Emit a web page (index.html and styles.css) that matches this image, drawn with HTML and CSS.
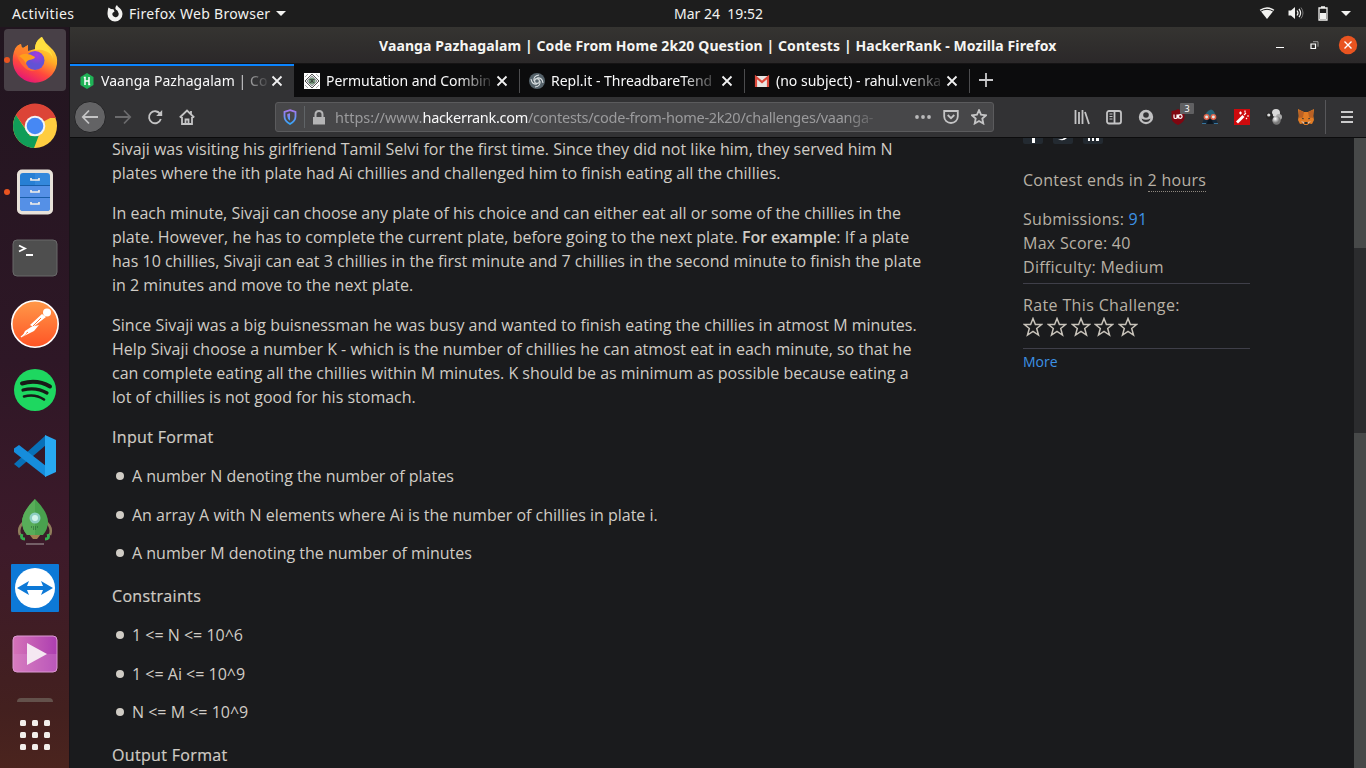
FILE: index.html
```html
<!DOCTYPE html>
<html lang="en">
<head>
<meta charset="utf-8">
<title>Vaanga Pazhagalam</title>
<link rel="stylesheet" href="styles.css">
</head>
<body>
<header class="topbar">
  <span class="activities">Activities</span>
  <svg class="app-mark" width="16" height="17" viewBox="0 0 16 17"><path fill="#f2f2f0" d="M1.500 2.500 4 4 6.500 4.300 7.500 6.500 5.500 8A3.200 3.200 0 1 0 11 7C11 5.500 9 5 8.500 4 8 2.500 9 1 10 0c.5 2 2.500 2.500 4 4.500 1 1.500 1.500 3 1.500 4.500a7.500 7.500 0 0 1-15 0C.5 6.500 1 4 1.500 2.500z"/></svg>
  <span class="app-name">Firefox Web Browser</span>
  <i class="caret"></i>
  <span class="clock">Mar 24&nbsp; 19:52</span>
  <div class="status">
    <svg width="16" height="14" viewBox="0 0 16 14"><path d="M.7 3.800Q8-1.300 15.300 3.800L8 13z" fill="#f2f2f0"/><path d="M1.500 4.300Q8 .3 14.500 4.300" stroke="#1d1d1d" fill="none" stroke-width="1" transform="translate(0 1)"/></svg>
    <svg width="16" height="14" viewBox="0 0 16 14"><path d="M.5 4.500H3L7 1v12L3 9.500H.5z" fill="#f2f2f0"/><path d="M9 4.500q2 2.500 0 5M11 2.800q3.200 4.200 0 8.400" fill="none" stroke="#f2f2f0" stroke-width="1.200"/><path d="M13 1.500q4 5.500 0 11" fill="none" stroke="#777"/></svg>
    <svg width="10" height="15" viewBox="0 0 10 15"><path d="M1 2h8v12H1zM3 .8h4" fill="none" stroke="#f2f2f0" stroke-width="1.300"/><path d="M2 7h6v6H2z" fill="#f2f2f0"/></svg>
    <i class="caret"></i>
  </div>
</header>
<div class="desktop">
<nav class="dock">
  <div class="app active run"><svg width="46" height="48" viewBox="0 0 46 48">
    <defs><linearGradient id="fx" x1=".8" y1="0" x2=".3" y2="1"><stop offset="0" stop-color="#fff14a"/><stop offset=".4" stop-color="#ffad25"/><stop offset=".7" stop-color="#ff493d"/><stop offset="1" stop-color="#e3127b"/></linearGradient><radialGradient id="fp" cx=".6" cy=".2"><stop offset="0" stop-color="#a53adf"/><stop offset="1" stop-color="#6352d5"/></radialGradient></defs>
    <path fill="url(#fx)" d="M3 13Q5 9 9 8q0 3 2 4l5-3v6l7-2c0-6 3-10 7-12q3 6 8 10l3 3q5 6 4 14a22.300 22.300 0 0 1-44 0Q0 19 3 13z"/><path fill="#ff792c" d="M3 13Q5 9 9 8q0 3 2 4l5-3v6q4 0 8 5 0 3-8 5 2 7 10 8-8 5-15-3Q6 25 3 13z" opacity=".75"/><circle cx="23" cy="24.500" r="9.500" fill="url(#fp)"/><path fill="#ff9e1b" d="M7 20q7-5 16 1 0 2-6 3-3 1-3 4-2-5-7-8z"/><path fill="#ffdf40" d="M23 14c0-7 3-11 7-13 1 7 10 12 11 22q-2-7-8-8-3-2-10-1z"/></svg></div>
  <div class="app"><svg width="46" height="46" viewBox="0 0 46 46"><circle cx="23" cy="23" r="22" fill="#ffcd40"/><path d="M23 23H12L4 12A22 22 0 0 1 42 13z" fill="#dc4437"/><path d="m4 12 14 21 9-1-5 13A22 22 0 0 1 4 12z" fill="#109d58"/><path d="m4 12 10 14 4-11h26l-2-4A22 22 0 0 0 4 12" fill="#dc4437"/><circle cx="23" cy="23" r="10.300" fill="#f4f4f4"/><circle cx="23" cy="23" r="8.300" fill="#4688f4"/></svg></div>
  <div class="app run"><svg width="38" height="46" viewBox="0 0 38 46"><rect x="1" y=".5" width="36" height="45" rx="5" fill="#e8e2da"/><path d="M4 7q0-3 3-3h12v38H7q-3 0-3-3z" fill="#277fd4"/><path d="M19 4h12q3 0 3 3v32q0 3-3 3H19z" fill="#3488dc"/><path d="M4 17h30v11H4zM4 29h30v10q0 3-3 3H7q-3 0-3-3z" fill="#5590e6"/><path d="M4 16.500h30M4 28.500h30" stroke="#185da8"/><path d="M15 9v2h8V9M15 21v2h8v-2M15 33v2h8v-2" fill="none" stroke="#f2eee9" stroke-width="1.700"/></svg></div>
  <div class="app"><svg width="46" height="38" viewBox="0 0 46 38"><rect x="1" y="1" width="44" height="36" rx="4" fill="#4e4e4e" stroke="#696969"/><path d="m7 6.500 6 3-6 3M14 16h7" fill="none" stroke="#fff" stroke-width="1.800"/></svg></div>
  <div class="app"><svg width="50" height="50" viewBox="0 0 50 50"><defs><linearGradient id="pm" x1="0" y1="0" x2="0" y2="1"><stop offset="0" stop-color="#ff9949"/><stop offset="1" stop-color="#ff5425"/></linearGradient></defs><circle cx="25" cy="25" r="23.200" fill="url(#pm)" stroke="#fff" stroke-width="1.600"/><circle cx="37" cy="13.500" r="4" fill="#fff"/><path d="M32 15 20 26l3 2 13-10zM21 28l-6 4-3 6 12-6 5-6z" fill="#fff"/><path d="m12 38 6-5M31 19l-8 8" stroke="#ff7537"/><path d="m11 38 5-4" stroke="#fff" stroke-width="1.500"/></svg></div>
  <div class="app"><svg width="44" height="44" viewBox="0 0 44 44"><circle cx="22" cy="22" r="21" fill="#1ed760"/><g fill="none" stroke="#181a18" stroke-linecap="round"><path d="M9 15.500q15-4.500 28 3" stroke-width="4"/><path d="M10 22q13-3.500 24 3" stroke-width="3.200"/><path d="M11 28.500q11-3 20 3" stroke-width="2.600"/></g></svg></div>
  <div class="app"><svg width="44" height="44" viewBox="0 0 44 44"><path d="m1 30 5 4L33 11V1z" fill="#0870b7"/><path d="M1 14.500 6 11l27 21v11L1 18z" fill="#168ddc"/><path d="M32 1 43 6v32l-11 5z" fill="#28a8f2"/></svg></div>
  <div class="app"><svg width="38" height="48" viewBox="0 0 38 48"><path d="M9 23q-8 6-5 14M29 23q8 6 5 14" stroke="#8f7d5b" stroke-width="2.500" fill="none"/><path d="M9 41q-5 0-3-5M29 41q5 0 3-5" stroke="#36af50" stroke-width="3" fill="none"/><path d="M13 36h12l-4 5h-4z" fill="#a28251"/><path d="M19 1Q32 14 32 24q0 7-5 13H11q-5-6-5-13Q6 14 19 1z" fill="#49a14e"/><path d="M19 1v36h-8q-5-6-5-13Q6 14 19 1z" fill="#58ad59"/><circle cx="19" cy="20" r="5.500" fill="#8ccdc0"/><circle cx="19" cy="20" r="3" fill="#d3f4ea"/><path d="M15 29h8M17 31h4" stroke="#235c32" stroke-dasharray="1 1"/><path d="M10 46h18" stroke="#87777d" stroke-width="1.500"/></svg></div>
  <div class="app"><svg width="48" height="48" viewBox="0 0 48 48"><rect width="48" height="48" rx="1" fill="#0d79d7"/><circle cx="24" cy="24" r="20" fill="#fff"/><path d="m6 24 12-7-2 5h16l-2-5 12 7-12 7 2-5H16l2 5z" fill="#0d79d7"/></svg></div>
  <div class="app"><svg width="46" height="38" viewBox="0 0 46 38"><defs><linearGradient id="vp"><stop stop-color="#d574b8"/><stop offset="1" stop-color="#ad3eb1"/></linearGradient></defs><rect x="1" y="1" width="44" height="36" rx="4" fill="url(#vp)" stroke="#dc9bd2"/><path d="M1 19h44v14q0 4-4 4H5q-4 0-4-4z" fill="#dc91cf" opacity=".3"/><path d="m15 8 20 11-20 11z" fill="#f5e8f2"/></svg></div>
  <div class="peek"></div>
  <div class="grid"><i></i><i></i><i></i><i></i><i></i><i></i><i></i><i></i><i></i></div>
</nav>
<main class="window">
  <div class="titlebar"><span class="title">Vaanga Pazhagalam | Code From Home 2k20 Question | Contests | HackerRank - Mozilla Firefox</span>
    <div class="wm"><i class="min"></i><svg width="9" height="9" viewBox="0 0 9 9"><path d="M1 3h4.500v4.500H1z" fill="none" stroke="#fff" stroke-width="1.200"/><path d="M3 .7h5v5" fill="none" stroke="#999"/></svg><svg width="20" height="20" viewBox="0 0 20 20"><circle cx="10" cy="10" r="9.200" fill="#e95420"/><path d="m6.500 6.500 7 7m0-7-7 7" stroke="#fff" stroke-width="1.400"/></svg></div>
  </div>
  <div class="tabs">
    <div class="tab current"><svg width="16" height="16" viewBox="0 0 16 16"><path d="m8 0 6.500 4v8L8 16l-6.500-4V4z" fill="#1fb256"/><path d="M6 4v8M10 4v8M6 8h4M4.800 4.500h2M9.200 11.500h2" stroke="#fff" stroke-width="1.500"/></svg><span class="label l1">Vaanga Pazhagalam | Coc</span><svg class="close" width="12" height="12"><path d="m1.500 1.500 9 9m0-9-9 9"/></svg></div>
    <div class="tab"><svg width="16" height="16" viewBox="0 0 16 16"><path fill="#fff" d="M0 0h16v16H0z"/><path d="m8 1 7 7-7 7-7-7z" fill="#eef0ed" stroke="#555"/><path d="m8 3 5 5-5 5-5-5z" fill="#b9c7bb" stroke="#667"  stroke-width=".6"/><circle cx="8" cy="8" r="3" fill="#6d9274"/><path d="M5.500 6.500h2v2h1v-2h2M5.500 10l2.500-1.500 2.500 1.500" fill="none" stroke="#333" stroke-width=".7"/><path d="m1 4 3-3m8 0 3 3M1 12l3 3m8 0 3-3" stroke="#aaa"/></svg><span class="label l2">Permutation and Combin</span><svg class="close" width="12" height="12"><path d="m1.500 1.500 9 9m0-9-9 9"/></svg></div>
    <div class="tab"><svg width="16" height="16" viewBox="0 0 16 16"><circle cx="8" cy="8" r="8" fill="#56636b"/><g fill="none" stroke="#dce1e3" stroke-width="1.100"><circle cx="8" cy="8" r="2.400"/><path d="M5 8q-1-5 5-6M11 8q1 5-5 6M8 5q5-1 6 5M8 11q-5 1-6-5"/></g></svg><span class="label l3">Repl.it - ThreadbareTend</span><svg class="close" width="12" height="12"><path d="m1.500 1.500 9 9m0-9-9 9"/></svg></div>
    <div class="tab"><svg width="16" height="16" viewBox="0 0 16 16"><path d="M1 3h14v11H1z" fill="#e8e5e3"/><path d="M2 14V4l6 5 6-5v10" fill="none" stroke="#dd493c" stroke-width="2.200"/></svg><span class="label l4">(no subject) - rahul.venka</span><svg class="close" width="12" height="12"><path d="m1.500 1.500 9 9m0-9-9 9"/></svg></div>
    <svg class="plus" width="16" height="16"><path d="M8 1v14M1 8h14" stroke="#c9c9cb" stroke-width="1.800"/></svg>
  </div>
  <div class="toolbar">
    <div class="nav"><span class="back"><svg width="18" height="16" viewBox="0 0 18 16"><path d="M8 1.500 1.800 8 8 14.500M2 8h15"/></svg></span>
    <span class="nb dim"><svg width="18" height="16" viewBox="0 0 18 16"><path d="M10 1.500 16.200 8 10 14.500M16 8H1"/></svg></span>
    <span class="nb"><svg width="16" height="16" viewBox="0 0 16 16"><path d="M13 4.800A6 6 0 1 0 13.800 10"/><path class="tip" d="M15.200 1v6H9.200z"/></svg></span>
    <span class="nb"><svg width="16" height="16" viewBox="0 0 16 16"><path d="m.8 8.500 7.200-7 7.200 7M3 8v7h10V8M12 2v3M6.500 14.500v-4h3v4"/></svg></span></div>
    <div class="urlbar"><svg width="14" height="16" viewBox="0 0 14 16"><defs><linearGradient id="sh" x1="0" y1="0" x2="0" y2="1"><stop stop-color="#a579ee"/><stop offset="1" stop-color="#35a6fa"/></linearGradient></defs><path d="M7 1.200 12.500 3v4.500q0 4.500-5.500 7.500-5.500-3-5.500-7.500V3z" fill="none" stroke="url(#sh)" stroke-width="1.800"/><path d="M7 4.300v7.500Q4.300 10 4.300 7V5z" fill="url(#sh)"/></svg>
      <i class="sep"></i><svg width="14" height="15" viewBox="0 0 14 15"><path d="M1 7h12v7.500H1z" fill="#b4b4b5"/><path d="M3.500 7V4.500Q3.500 1 7 1t3.500 3.500V7" stroke="#b4b4b5" fill="none" stroke-width="2"/></svg>
      <span class="url"><span class="u1">https://www.</span><b>hackerrank.com</b><span class="u2">/contests/code-from-home-2k20/challenges/vaanga-</span></span>
      <svg class="i-dots" width="16" height="16"><g fill="#b9b9ba"><circle cx="2" cy="8" r="1.900"/><circle cx="8" cy="8" r="1.900"/><circle cx="14" cy="8" r="1.900"/></g></svg>
      <svg width="16" height="16" viewBox="0 0 16 16" class="ln"><path d="M1.200 2h13.600v5.500a6.800 6.500 0 0 1-13.600 0z"/><path d="m4.700 6 3.300 3.200L11.300 6"/></svg>
      <svg width="16" height="16" viewBox="0 0 16 16" class="ln"><path d="m8 1.200 2 4.500 5 .6-3.700 3.200 1 5L8 12l-4.300 2.500 1-5L1 6.300l5-.6z"/></svg>
    </div>
    <div class="tools">
      <span><svg width="16" height="16" viewBox="0 0 16 16" class="ln"><path d="M1.500 1v14M5 3v12M8.500 1v14M11 3l4 12"/></svg></span>
      <span><svg width="16" height="16" viewBox="0 0 16 16" class="ln"><rect x="1" y="2" width="14" height="12.500" rx="2"/><path d="M8.500 2v12"/><path class="thin" d="M3.500 5h3M3.500 7.500h3M3.500 10h3"/></svg></span>
      <span><svg width="16" height="16" viewBox="0 0 16 16"><circle cx="8" cy="8" r="7.200" fill="#c0c0c1"/><circle cx="8" cy="6" r="2.800" fill="#323234"/><path d="M3.500 9.500q4.500 2.500 9 0Q11.500 13 8 13T3.500 9.500z" fill="#323234"/></svg></span>
      <span class="ub"><svg width="16" height="16" viewBox="0 0 16 16"><path d="M8 0q3 2 6.500 2v7q0 4-6.500 7-6.500-3-6.500-7V2Q5 2 8 0z" fill="#800610"/><path d="M4 5.500v3q0 1 1.500 1T7 8.500v-3M8.200 5.500v4" stroke="#fff" fill="none" stroke-width="1.200"/><circle cx="10.300" cy="7.500" r="1.800" stroke="#fff" fill="none" stroke-width="1.200"/></svg><em>3</em></span>
      <span><svg width="16" height="16" viewBox="0 0 16 16"><path d="M3 7Q4 2 9 .5 12 1 13 5l1 3H2z" fill="#286478"/><path d="M2 10h12l2 5H0z" fill="#14283a"/><path d="M6 10h4l1 5H5z" fill="#0d151e"/><g fill="#dfebe9" stroke="#e26349" stroke-width="1.500"><circle cx="4.600" cy="8" r="2.200"/><circle cx="11.400" cy="8" r="2.200"/></g><path d="M0 14.500h4M12 14.500h4" stroke="#37749c"/></svg></span>
      <span><svg width="16" height="16" viewBox="0 0 16 16"><path fill="#ce0a0d" d="M0 0h16v16H0z"/><path d="M3 13.500 9.500 7" stroke="#fff" stroke-width="2.800"/><path d="m10 6 2-2M5 4h3M6.500 2.500v3M11 1.500v2M13 7h2M12 9l1 1" stroke="#fff" stroke-width="1.200"/></svg></span>
      <span><svg width="16" height="16" viewBox="0 0 16 16"><defs><radialGradient id="bl" cx=".35" cy=".3"><stop stop-color="#fff"/><stop offset="1" stop-color="#777"/></radialGradient></defs><circle cx="10" cy="4" r="4" fill="#d8d8d8"/><circle cx="13" cy="8" r="3" fill="#aaa"/><circle cx="10.500" cy="11.500" r="4.200" fill="url(#bl)"/><circle cx="3.500" cy="7" r="3.500" fill="#292929"/><circle cx="2.800" cy="6" r="1.600" fill="#ddd"/></svg></span>
      <span><svg width="16" height="16" viewBox="0 0 16 16"><path d="m0 0 6 3h4l6-3-.7 7 .7 4-2 4-3-.5L9.500 16h-3L5 14.500 2 15l-2-4 .7-4z" fill="#e27c24"/><path d="M1 1l5 2-1 5-4 1zM15 1l-5 2 1 5 4 1z" fill="#bb6124"/><path d="m3.500 8.500 2.500 1-1 1zM12.500 8.500l-2.500 1 1 1zM6.500 13h3v2h-3z" fill="#222d36"/><path d="m3 12 3 1v2zM13 12l-3 1v2z" fill="#d6c0b2"/></svg></span>
    </div>
    <i class="vsep"></i>
    <svg class="menu" width="12" height="14"><path d="M0 2h12M0 7h12M0 12h12" stroke="#cbcbcc" stroke-width="2"/></svg>
  </div>
  <div class="view">
    <article class="page">
      <div class="problem">
        <p>Sivaji was visiting his girlfriend Tamil Selvi for the first time. Since they did not like him, they served him N<br>plates where the ith plate had Ai chillies and challenged him to finish eating all the chillies.</p>
        <p>In each minute, Sivaji can choose any plate of his choice and can either eat all or some of the chillies in the<br>plate. However, he has to complete the current plate, before going to the next plate. <strong>For example</strong>: If a plate<br>has 10 chillies, Sivaji can eat 3 chillies in the first minute and 7 chillies in the second minute to finish the plate<br>in 2 minutes and move to the next plate.</p>
        <p>Since Sivaji was a big buisnessman he was busy and wanted to finish eating the chillies in atmost M minutes.<br>Help Sivaji choose a number K - which is the number of chillies he can atmost eat in each minute, so that he<br>can complete eating all the chillies within M minutes. K should be as minimum as possible because eating a<br>lot of chillies is not good for his stomach.</p>
        <h3>Input Format</h3>
        <ul><li>A number N denoting the number of plates</li><li>An array A with N elements where Ai is the number of chillies in plate i.</li><li>A number M denoting the number of minutes</li></ul>
        <h3>Constraints</h3>
        <ul><li>1 &lt;= N &lt;= 10^6</li><li>1 &lt;= Ai &lt;= 10^9</li><li>N &lt;= M &lt;= 10^9</li></ul>
        <h3>Output Format</h3>
      </div>
      <aside class="side">
        <div class="social"><svg width="20" height="6"><path d="M0 0h20v4q0 2-2 2H2Q0 6 0 4z" fill="#232a31"/><path d="M9 0h3v5H9z" fill="#fff"/></svg><svg width="20" height="6"><path d="M0 0h20v4q0 2-2 2H2Q0 6 0 4z" fill="#232a31"/><path d="M5 1q4 1 6-1h3q-4 4-9 1z" fill="#fff"/></svg><svg width="20" height="6"><path d="M0 0h20v4q0 2-2 2H2Q0 6 0 4z" fill="#232a31"/><path d="M5 0h2v3H5zM9 0h2v3H9zM13 0h3v3h-3z" fill="#fff"/></svg></div>
        <p class="ends">Contest ends in <u>2 hours</u></p>
        <p class="facts">Submissions: <a>91</a><br>Max Score: 40<br>Difficulty: Medium</p>
        <div class="rate">Rate This Challenge:
          <div class="stars"><svg viewBox="0 0 20 20"><path d="m10 1.500 2.400 6h6.200l-4.900 4 1.800 6.500-5.500-3.700L4.500 18l1.800-6.500-4.900-4h6.200z"/></svg><svg viewBox="0 0 20 20"><path d="m10 1.500 2.400 6h6.200l-4.900 4 1.800 6.500-5.500-3.700L4.500 18l1.800-6.500-4.900-4h6.200z"/></svg><svg viewBox="0 0 20 20"><path d="m10 1.500 2.400 6h6.200l-4.900 4 1.800 6.500-5.500-3.700L4.500 18l1.800-6.500-4.900-4h6.200z"/></svg><svg viewBox="0 0 20 20"><path d="m10 1.500 2.400 6h6.200l-4.900 4 1.800 6.500-5.500-3.700L4.500 18l1.800-6.500-4.900-4h6.200z"/></svg><svg viewBox="0 0 20 20"><path d="m10 1.500 2.400 6h6.200l-4.900 4 1.800 6.500-5.500-3.700L4.500 18l1.800-6.500-4.900-4h6.200z"/></svg></div>
        </div>
        <a class="more">More</a>
      </aside>
    </article>
    <div class="scroll"><i></i></div>
  </div>
</main>
</div>
</body>
</html>
```
FILE: styles.css
```css
* { box-sizing: border-box; }
body { margin: 0; width: 1366px; height: 768px; overflow: hidden; background: #1a1b1d; font-family: "Noto Sans", "Open Sans", sans-serif; display: flex; flex-direction: column; }
svg { display: block; flex: none; }
.topbar { height: 27px; background: #1d1d1d; color: #f2f2f0; font-size: 14px; display: flex; align-items: center; padding-left: 12px; white-space: nowrap; }
.activities { width: 95px; letter-spacing: .4px; }
.app-mark { margin-top: -1px; }
.app-name { margin-left: 6px; width: 142px; letter-spacing: .32px; }
.caret { border: 5px solid transparent; border-top-color: #f2f2f0; border-bottom: 0; margin-left: 5px; }
.clock { margin-left: 388px; width: 92px; padding-bottom: 1px; }
.status { margin-left: auto; padding: 0 15px 1px 0; display: flex; align-items: center; }
.status svg:nth-child(2) { margin-left: 13px; }
.status svg:nth-child(3) { margin-left: 14px; }
.status .caret { margin-left: 13px; }
.desktop { flex: 1; display: flex; min-height: 0; }
.dock { width: 70px; flex: none; background: linear-gradient(#21151f, #2e1726 45%, #3d1a2a 70%, #43201f 92%, #4b241e); display: flex; flex-direction: column; align-items: center; border-right: 1px solid #191419; }
.app { width: 62px; height: 62px; margin: 2px 0 2px 0; border-radius: 4px; display: flex; align-items: center; justify-content: center; flex: none; position: relative; }
.app.active { background: #484047; }
.app.run::before { content: ""; position: absolute; left: 0; top: 28px; width: 6px; height: 6px; border-radius: 50%; background: #e95420; }
.peek { width: 36px; height: 4px; border-radius: 6px 6px 0 0; background: #63514b; margin-top: 11px; }
.grid { display: grid; grid-template-columns: repeat(3, 6px); gap: 6px; margin-top: 18px; }
.grid i { height: 6px; background: #f2efeb; border-radius: 1.5px; }
.window { flex: 1; min-width: 0; display: flex; flex-direction: column; }
.titlebar { height: 37px; background: linear-gradient(#353431, #2b2829); border-bottom: 1px solid #151314; display: flex; align-items: center; padding-left: 309px; color: #f6f5f3; white-space: nowrap; }
.title { font-weight: 700; font-size: 14px; letter-spacing: .1px; }
.wm { margin-left: auto; display: flex; align-items: center; padding-right: 8px; }
.min { width: 8px; height: 1px; background: #fff; margin: 4px 26px 0 0; }
.wm svg:last-child { margin-left: 19px; margin-top: -1px; }
.tabs { height: 33px; background: #0c0c0d; display: flex; align-items: stretch; }
.tab { width: 225px; display: flex; align-items: center; padding: 1px 0 0 10px; color: #f9f9fa; font-size: 14px; position: relative; }
.tab + .tab::after { content: ""; position: absolute; right: -1px; top: 5px; width: 1px; height: 24px; background: #4c4c4e; }
.tab.current { width: 224px; background: #323234; border-top: 2px solid #0a84ff; padding: 0 0 1px 9px; }
.label { margin-left: 6px; width: 166px; padding-bottom: 2px; white-space: nowrap; -webkit-mask-image: linear-gradient(90deg, #000 132px, transparent 170px); }
.l1 { letter-spacing: .05px; }
.l2 { letter-spacing: -.05px; }
.close { margin-left: 4px; }
.close path { stroke: #f0f0f1; stroke-width: 1.800; }
.plus { margin: 8px 0 0 9px; }
.toolbar { height: 41px; background: #323234; border-bottom: 1px solid #0c0c0d; display: flex; align-items: center; }
.nav { width: 205px; display: flex; padding-left: 4px; align-items: center; }
.nav svg, .ln { fill: none; stroke: #c4c4c5; stroke-width: 1.800; }
.nav .tip { fill: #c4c4c5; stroke: none; }
.ln .thin { stroke-width: 1; }
.back { width: 32px; height: 32px; border-radius: 50%; background: #636365; border: 1px solid #242426; display: grid; place-items: center; }
.nb { width: 32px; display: grid; place-items: center; }
.nb.dim svg { stroke: #6b6b6d; }
.nb.dim { width: 33px; }
.urlbar { width: 719px; height: 30px; background: #474749; border: 1px solid #5b5b5d; border-radius: 3px; display: flex; align-items: center; padding-left: 7px; }
.sep { width: 1px; height: 22px; background: #606467; margin: 0 7px; }
.url { margin-left: 9px; width: 547px; white-space: nowrap; color: #9b9b9d; font-size: 14.500px; -webkit-mask-image: linear-gradient(90deg, #000 510px, transparent 549px); }
.u2 { letter-spacing: -.26px; }
.url b { font-weight: 400; color: #f9f9fa; letter-spacing: -.3px; }
.i-dots { margin-left: 33px; }
.urlbar .ln { margin-left: 12px; }
.tools { margin-left: 72px; display: flex; }
.tools span { width: 32px; height: 32px; display: grid; place-items: center; position: relative; }
.ub em { position: absolute; left: 18px; top: 2px; width: 14px; height: 11px; font: 9px/11px "Noto Sans", sans-serif; text-align: center; color: #fff; background: #606062; border-radius: 1px; }
.vsep { width: 1px; height: 34px; background: #57575a; margin-left: 3px; }
.menu { margin-left: 15px; }
.view { flex: 1; min-height: 0; overflow: hidden; display: flex; background: #1a1b1d; font: 16px/24px "Open Sans", sans-serif; color: #d0ccc5; }
.page { flex: 1; display: flex; padding-left: 42px; white-space: nowrap; }
.problem { width: 911px; margin-top: -1px; }
p { margin: 0; }
.problem p { margin-bottom: 16px; }
strong { font-weight: 600; letter-spacing: -.12px; }
h3 { font-size: 16px; line-height: 24px; font-weight: 500; margin: 0; letter-spacing: .33px; -webkit-text-stroke: .2px #d0ccc5; }
ul { list-style: none; margin: 15px 0 19px; padding: 0 0 0 20px; display: flex; flex-direction: column; gap: 14.500px; }
li { position: relative; }
li::before { content: ""; position: absolute; left: -16px; top: 8px; width: 8px; height: 8px; border-radius: 50%; background: #d0ccc5; }
.side { width: 227px; color: #b8b1a5; letter-spacing: .28px; }
.social { display: flex; gap: 10px; height: 6px; }
.ends { margin-top: 24px; }
u { text-decoration: none; border-bottom: 1px dotted #8e887f; }
.facts { margin-top: 15px; padding-bottom: 4px; border-bottom: 1px solid #3f3f49; }
a { color: #3d92e6; }
.rate { margin-top: 9px; height: 56px; border-bottom: 1px solid #3f3f49; letter-spacing: .36px; }
.stars { display: flex; gap: 3.800px; margin-top: 0; }
.stars svg { width: 20px; height: 20px; fill: none; stroke: #c8c3ba; stroke-width: 1.500; }
.more { font-size: 14px; display: block; margin-top: 1px; letter-spacing: 0; }
.scroll { width: 12px; background: #474949; padding-top: 110px; }
.scroll i { display: block; height: 185px; background: #2b2c2e; }
```
